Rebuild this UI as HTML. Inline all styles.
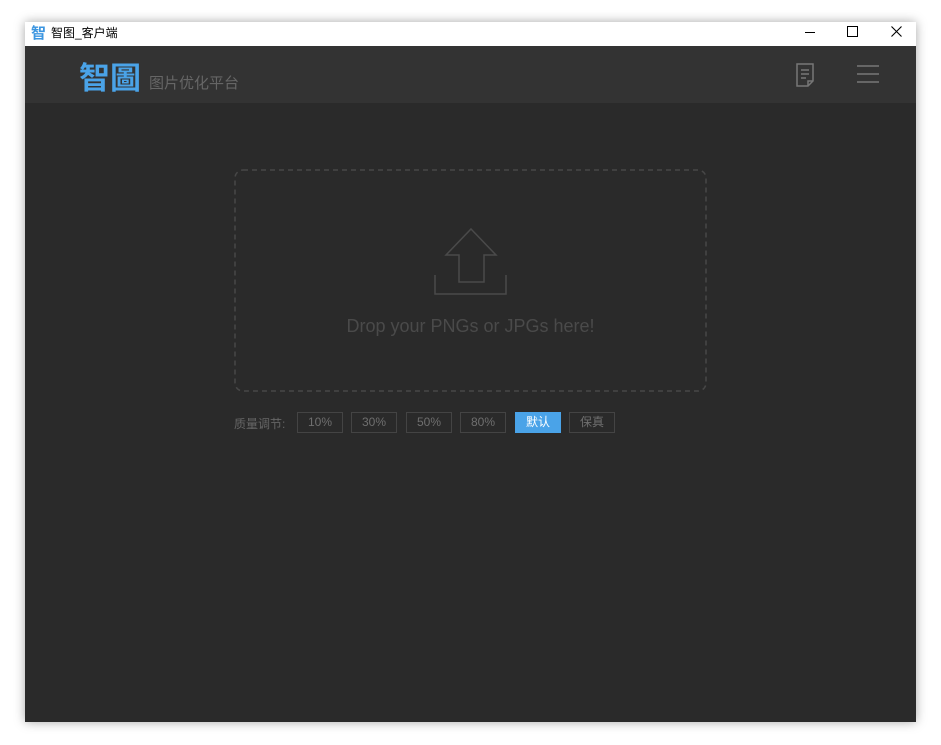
<!DOCTYPE html>
<html><head><meta charset="utf-8"><style>
body{margin:0;width:941px;height:745px;background:#fff;position:relative;overflow:hidden;font-family:"Liberation Sans","Noto Sans CJK SC",sans-serif}
.win{position:absolute;left:25px;top:22px;width:891px;height:700px;background:#2a2a2a;box-shadow:0 0 10px rgba(0,0,0,.35)}
.title{position:absolute;left:0;top:0;width:891px;height:24px;background:#fff}
.hdr{position:absolute;left:0;top:24px;width:891px;height:57px;background:#333}
.btn{position:absolute;top:390px;height:19px;width:44px;border:1px solid #444;color:#6f6f6f;font-size:12px;line-height:19px;text-align:center;box-sizing:content-box}
</style></head><body>
<div class="win">
 <div class="title">
  <span style="position:absolute;left:6px;top:0px;color:#3b95e0;font-size:15px;font-weight:bold">智</span>
  <span style="position:absolute;left:26px;top:2px;color:#000;font-size:12px">智图_客户端</span>
  <div style="position:absolute;left:780px;top:10px;width:10px;height:1px;background:#000"></div>
  <div style="position:absolute;left:822px;top:4px;width:9px;height:9px;border:1px solid #000"></div>
  <svg style="position:absolute;left:866px;top:4px" width="11" height="11" stroke="#000" stroke-width="1.1"><path d="M0.5 0.5L10.5 10.5M10.5 0.5L0.5 10.5"/></svg>
 </div>
 <div class="hdr">
  <span style="position:absolute;left:54px;top:7px;color:#4aa3e8;font-size:31px;font-weight:bold;letter-spacing:0px">智圖</span>
  <span style="position:absolute;left:124px;top:26px;color:#666;font-size:15px">图片优化平台</span>
  <svg style="position:absolute;left:770px;top:16px" width="22" height="26" viewBox="0 0 22 26" fill="none" stroke="#777" stroke-width="1.5"><path d="M2 2H18V19L13 24H2Z"/><path d="M13 24V19H18"/><path d="M6 8H14M6 12H14M6 16H11"/></svg>
  <svg style="position:absolute;left:831px;top:18px" width="24" height="20" stroke="#777" stroke-width="1.5"><path d="M1 2H23M1 10H23M1 18H23"/></svg>
 </div>
 <svg style="position:absolute;left:0;top:0" width="891" height="700">
  <rect x="210" y="148" width="471" height="221" rx="8" fill="none" stroke="#474747" stroke-width="1.5" stroke-dasharray="5,4"/>
  <path d="M446 207L471 233H459V260H434V233H421Z" fill="none" stroke="#4a4a4a" stroke-width="1.5"/>
  <path d="M410 253V272H481V253" fill="none" stroke="#4a4a4a" stroke-width="1.5"/>
 </svg>
 <div style="position:absolute;left:210px;top:294px;width:471px;text-align:center;color:#4a4a4a;font-size:18px">Drop your PNGs or JPGs here!</div>
 <span style="position:absolute;left:209px;top:393px;color:#666;font-size:12px">质量调节:</span>
 <div class="btn" style="left:272px">10%</div>
 <div class="btn" style="left:326px">30%</div>
 <div class="btn" style="left:381px">50%</div>
 <div class="btn" style="left:435px">80%</div>
 <div class="btn" style="left:490px;background:#4aa3e8;border-color:#4aa3e8;color:#fff">默认</div>
 <div class="btn" style="left:544px">保真</div>
</div>
</body></html>
